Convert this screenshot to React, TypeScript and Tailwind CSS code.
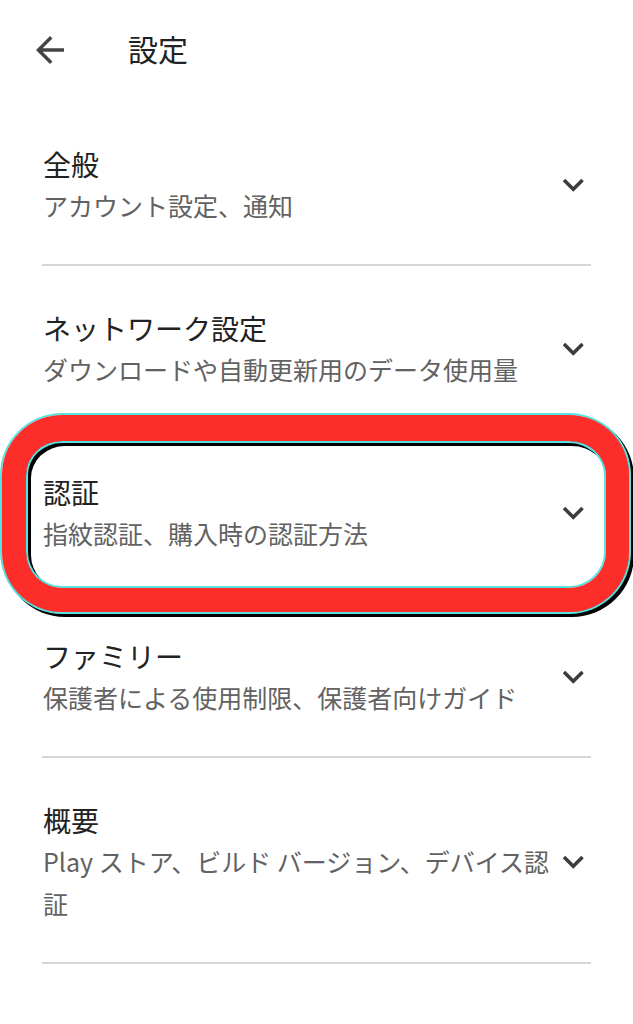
const settingsItems = [
  { title: "全般", subtitle: "アカウント設定、通知" },
  { title: "ネットワーク設定", subtitle: "ダウンロードや自動更新用のデータ使用量" },
  { title: "認証", subtitle: "指紋認証、購入時の認証方法", highlighted: true },
  { title: "ファミリー", subtitle: "保護者による使用制限、保護者向けガイド" },
  { title: "概要", subtitle: "Play ストア、ビルド バージョン、デバイス認証" },
];

function ExpandIcon() {
  return (
    <svg
      className="h-[17.5px] w-[24.5px] shrink-0 text-[#3c3c3c]"
      viewBox="5 7 14 10"
      fill="currentColor"
    >
      <path d="M16.59 8.59 12 13.17 7.41 8.59 6 10l6 6 6-6z" />
    </svg>
  );
}

export default function App() {
  return (
    <main className="min-h-screen bg-white font-['Noto_Sans_CJK_JP','Noto_Sans',sans-serif]">
      <header className="flex h-[102px] items-center">
        <svg
          className="mb-[2px] ml-[29px] h-[42px] w-[42px] text-[#444]"
          viewBox="0 0 24 24"
          fill="currentColor"
        >
          <path d="M20 11H7.83l5.59-5.59L12 4l-8 8 8 8 1.41-1.41L7.83 13H20v-2z" />
        </svg>
        <h1 className="mb-[6px] ml-[57px] text-[30px] text-[#222]">設定</h1>
      </header>

      <ul>
        {settingsItems.map((item, index) => (
          <li key={item.title}>
            {index > 0 ? <div className="mx-[42px] h-[2px] bg-[#d6d6d6]" /> : null}
            <div className="relative flex items-center pt-[42px] pb-[38px] pl-[43px] pr-[48px]">
              <div className="flex-1">
                <p className="text-[28px] leading-[40px] text-[#222]">{item.title}</p>
                <p className="text-[25px] leading-[42px] text-[#626262]">{item.subtitle}</p>
              </div>
              <ExpandIcon />

              {item.highlighted ? (
                <div className="pointer-events-none absolute -top-[15px] -bottom-[20px] left-[2px] right-[4px] z-10 rounded-[60px] border-t-[26px] border-r-[23px] border-b-[24px] border-l-[24px] border-[#fd2d2a] shadow-[0_0_0_2px_#59e3e0,3px_3px_0_2px_#000,inset_0_0_0_2px_#59e3e0,inset_3px_3px_0_2px_#000]" />
              ) : null}
            </div>
          </li>
        ))}
      </ul>
      <div className="mx-[42px] h-[2px] bg-[#d6d6d6]" />
    </main>
  );
}
